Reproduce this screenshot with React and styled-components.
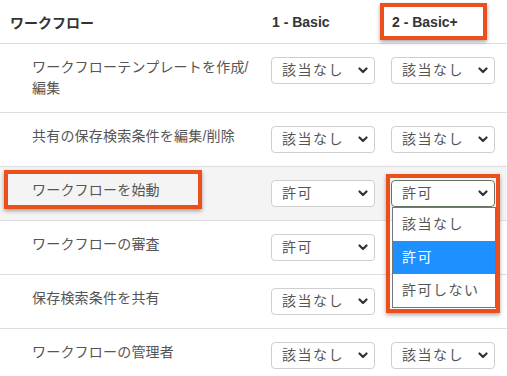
import React from "react";
import styled, { createGlobalStyle } from "styled-components";

const Global = createGlobalStyle`
  html, body { margin: 0; padding: 0; background: #fff; }
  body { font-family: "Liberation Sans", "Noto Sans CJK JP", sans-serif; overflow: hidden; }
`;

const Table = styled.div`
  width: 507px;
  display: grid;
  grid-template-columns: 263px 120px 124px;
`;

const HeadCell = styled.div`
  position: relative;
  height: 44px;
  box-sizing: border-box;
  border-bottom: 1px solid #dedede;
  display: flex;
  align-items: center;
  padding-left: ${(p) => (p.$first ? "10px" : "9px")};
  font-size: 14px;
  font-weight: bold;
  color: #333;
  white-space: nowrap;
`;

const Cell = styled.div`
  position: relative;
  box-sizing: border-box;
  border-bottom: 1px solid #dedede;
  background: ${(p) => (p.$hl ? "#f4f4f4" : "#fff")};
  padding: 13px 0 13px ${(p) => (p.$first ? "32px" : "8px")};
  min-height: 54px;
  font-size: 14px;
  line-height: ${(p) => (p.$first ? "21px" : "27px")};
  color: #555;
  letter-spacing: 0.2px;
`;

const Select = styled.div`
  position: relative;
  width: 104px;
  height: 27px;
  box-sizing: border-box;
  border: 1px solid ${(p) => (p.$focus ? "#66755f" : "#cfcfcf")};
  border-radius: 4px;
  background: #fff;
  display: flex;
  align-items: center;
  justify-content: space-between;
  padding: 0 6px 0 10px;
  font-size: 14px;
  color: #555;
  letter-spacing: 1.5px;
`;

const Chevron = () => (
  <svg width="10" height="7" viewBox="0 0 10 7">
    <polyline points="1.5,1.5 5,5 8.5,1.5" fill="none" stroke="#333" strokeWidth="2.2" strokeLinecap="round" strokeLinejoin="round" />
  </svg>
);

const Menu = styled.div`
  position: absolute;
  left: 0;
  top: 26px;
  width: 104px;
  box-sizing: border-box;
  border: 1px solid #767676;
  background: #fff;
  z-index: 5;
`;

const Option = styled.div`
  height: 33px;
  display: flex;
  align-items: center;
  padding-left: 9px;
  font-size: 14px;
  letter-spacing: 1.5px;
  color: ${(p) => (p.$active ? "#fff" : "#555")};
  background: ${(p) => (p.$active ? "#1e90ff" : "#fff")};
`;

const Mark = styled.div`
  position: absolute;
  left: ${(p) => p.$l}px;
  top: ${(p) => p.$t}px;
  width: ${(p) => p.$w}px;
  height: ${(p) => p.$h}px;
  box-sizing: border-box;
  border: 4px solid #ea4f1c;
  box-shadow: 0 2px 4px rgba(0, 0, 0, 0.35);
  pointer-events: none;
  z-index: 6;
`;

const Dropdown = ({ value, focus, open }) => (
  <Select $focus={focus}>
    <span>{value}</span>
    <Chevron />
    {open && (
      <Menu>
        <Option>該当なし</Option>
        <Option $active>許可</Option>
        <Option>許可しない</Option>
      </Menu>
    )}
  </Select>
);

const rows = [
  { label: "ワークフローテンプレートを作成/\n編集", a: "該当なし", b: "該当なし" },
  { label: "共有の保存検索条件を編集/削除", a: "該当なし", b: "該当なし" },
  { label: "ワークフローを始動", a: "許可", b: "許可", hl: true },
  { label: "ワークフローの審査", a: "許可", b: null },
  { label: "保存検索条件を共有", a: "該当なし", b: null },
  { label: "ワークフローの管理者", a: "該当なし", b: "該当なし" },
];

export default function App() {
  return (
    <>
      <Global />
      <Table>
        <HeadCell $first>ワークフロー</HeadCell>
        <HeadCell>1 - Basic</HeadCell>
        <HeadCell>
          2 - Basic+
          <Mark $l={-3} $t={3} $w={107} $h={37} />
        </HeadCell>
        {rows.map((r, i) => (
          <React.Fragment key={i}>
            <Cell $first $hl={r.hl}>
              {r.label.split("\n").map((t, j) => (
                <div key={j}>{t}</div>
              ))}
              {r.hl && <Mark $l={4} $t={3} $w={198} $h={39} />}
            </Cell>
            <Cell $hl={r.hl}>
              <Dropdown value={r.a} />
            </Cell>
            <Cell $hl={r.hl}>
              {r.b && <Dropdown value={r.b} focus={r.hl} open={r.hl} />}
              {r.hl && <Mark $l={3} $t={7} $w={114} $h={139} />}
            </Cell>
          </React.Fragment>
        ))}
      </Table>
    </>
  );
}
